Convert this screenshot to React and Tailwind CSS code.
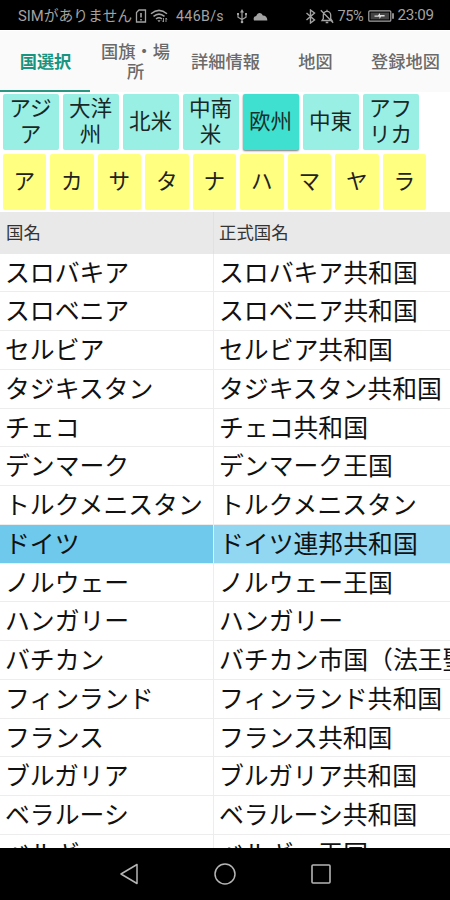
const tabs = ['国選択', '国旗・場所', '詳細情報', '地図', '登録地図'];
const regions = ['アジア', '大洋州', '北米', '中南米', '欧州', '中東', 'アフリカ'];
const kana = ['ア', 'カ', 'サ', 'タ', 'ナ', 'ハ', 'マ', 'ヤ', 'ラ'];
const countries = [
  ['スロバキア', 'スロバキア共和国'],
  ['スロベニア', 'スロベニア共和国'],
  ['セルビア', 'セルビア共和国'],
  ['タジキスタン', 'タジキスタン共和国'],
  ['チェコ', 'チェコ共和国'],
  ['デンマーク', 'デンマーク王国'],
  ['トルクメニスタン', 'トルクメニスタン'],
  ['ドイツ', 'ドイツ連邦共和国'],
  ['ノルウェー', 'ノルウェー王国'],
  ['ハンガリー', 'ハンガリー'],
  ['バチカン', 'バチカン市国（法王聖'],
  ['フィンランド', 'フィンランド共和国'],
  ['フランス', 'フランス共和国'],
  ['ブルガリア', 'ブルガリア共和国'],
  ['ベラルーシ', 'ベラルーシ共和国'],
  ['ベルギー', 'ベルギー王国'],
];

function StatusBar() {
  return (
    <header className="flex h-[30px] shrink-0 items-center bg-black pt-[2px] pl-[18px] text-[14px] leading-none text-[#a3a3a3]">
      <span className="w-[115px] shrink-0 whitespace-nowrap text-[14.8px]">SIMがありません</span>
      <svg className="ml-[2px] h-[14px] w-[12px] shrink-0" viewBox="0 0 12 14" fill="none" stroke="currentColor" strokeWidth="1.3">
        <path d="M4 1h6.5v12H1.5V3.5z" />
        <path d="M6 4v4.5M6 10v1.5" strokeWidth="1.6" />
      </svg>
      <svg className="ml-[3px] h-[14px] w-[18px] shrink-0" viewBox="0 0 18 14" fill="none" stroke="currentColor" strokeWidth="1.5">
        <path d="M1 4.7Q9-2 17 4.7M3.5 7.4Q9 2.8 14.5 7.4M6 10Q9 7.6 12 10" />
        <path d="M7.4 11.2h3.2L9 13.2z" fill="currentColor" stroke="none" />
        <path d="M13.5 9v4M12 11.5l1.5 1.5M16 13V9m1 1.5L16 9" strokeWidth="0.9" />
      </svg>
      <span className="ml-[8px] w-[49px] shrink-0 whitespace-nowrap text-[14.2px] tracking-[0.35px]">446B/s</span>
      <svg className="ml-[11px] h-[15px] w-[12px] shrink-0" viewBox="0 0 12 15" fill="none" stroke="currentColor" strokeWidth="1.2">
        <path d="M6 2v11M2 5.5v2.7l4 2.3 4-2.3V5.5" />
        <path d="M6 0 4 3.4h4zM1 4h2v2H1zM9 4h2v2H9z" fill="currentColor" stroke="none" />
        <circle cx="6" cy="13" r="1.3" fill="currentColor" stroke="none" />
      </svg>
      <svg className="ml-[5px] h-[10px] w-[15px] shrink-0" viewBox="0 0 15 10" fill="currentColor">
        <path d="M1 9.5C0 7 1.2 5.3 3.2 5 4.5 1.5 8 1 9.8 4.5 12.5 4.4 14.5 6.5 14.3 9.5z" />
      </svg>
      <svg className="ml-[37px] h-[15px] w-[11px] shrink-0" viewBox="0 0 11 15" fill="none" stroke="currentColor" strokeWidth="1.4">
        <path d="m1.5 4 8 7-4 3V1l4 3-8 7" />
      </svg>
      <svg className="ml-[4px] h-[15px] w-[14px] shrink-0" viewBox="0 0 14 15" fill="none" stroke="currentColor" strokeWidth="1.3">
        <path d="M2 11.5h10L10.7 9.5V6A3.7 3.7 0 0 0 7 2.3 3.7 3.7 0 0 0 3.3 6v3.5zM7 .8v1.5M5.7 13.5h2.6M.8 1.2l12.4 12.6" />
      </svg>
      <span className="ml-[3.5px] w-[28.5px] shrink-0 whitespace-nowrap text-[14.6px] tracking-[-0.4px]">75%</span>
      <svg className="ml-[1.5px] h-[12px] w-[26px] shrink-0" viewBox="0 0 26 12" fill="none" stroke="currentColor" strokeWidth="1.2">
        <rect x=".8" y=".8" width="22" height="10.4" rx="1" />
        <rect x="2.6" y="2.6" width="18.4" height="6.8" fill="#444" stroke="none" />
        <path d="M25 3.2v5.6" strokeWidth="1.7" />
        <path d="M6.5 5.6h3.4L12 3v2h4.6v1.4h-3.4L11.4 9V6.8H6.5z" fill="#ddd" stroke="none" />
      </svg>
      <span className="ml-[4px] whitespace-nowrap text-[15.2px] tracking-[-0.3px]">23:09</span>
    </header>
  );
}

function Tabs() {
  return (
    <nav className="grid h-[62px] shrink-0 grid-cols-5 border-t border-white bg-[#fafafa]">
      {tabs.map((tab, i) => (
        <div
          key={tab}
          className={
            i === 0
              ? 'flex items-center justify-center border-b-2 border-[#299782] pt-[2px] pl-[1px] text-[17.2px] leading-[20px] font-bold text-[#189581]'
              : 'flex items-center justify-center border-b-2 border-transparent pt-[2px] pl-[1px] text-center text-[17.2px] leading-[20px] font-medium text-[#6a6a6a]'
          }
        >
          <span className={i === 1 ? 'w-[72px]' : 'whitespace-nowrap'}>{tab}</span>
        </div>
      ))}
    </nav>
  );
}

function CountryTable() {
  return (
    <main className="flex min-h-0 flex-1 flex-col overflow-hidden">
      <div className="flex h-[41.5px] shrink-0 items-center bg-[#e9e9e9] text-[17.4px] text-[#333333]">
        <div className="flex h-full w-[214px] shrink-0 items-center border-r border-[#e1e1e1] pl-[6px]">国名</div>
        <div className="pl-[5px]">正式国名</div>
      </div>
      {countries.map(([name, official], i) => (
        <div key={name} className="flex h-[38.75px] shrink-0 text-[24.85px] leading-[39px] whitespace-nowrap text-[#111111]">
          <div
            className={
              i === 7
                ? 'w-[214px] shrink-0 border-r border-b border-[#ededed] bg-[#6ec9ec] pl-[5px]'
                : 'w-[214px] shrink-0 border-r border-b border-[#ededed] pl-[5px]'
            }
          >
            {name}
          </div>
          <div
            className={
              i === 7
                ? 'min-w-0 flex-1 overflow-hidden border-b border-[#ededed] bg-[#91d7f2] pl-[5px]'
                : 'min-w-0 flex-1 overflow-hidden border-b border-[#ededed] pl-[5px]'
            }
          >
            {official}
          </div>
        </div>
      ))}
    </main>
  );
}

export default function App() {
  return (
    <div className="flex h-[900px] w-[450px] flex-col overflow-hidden bg-white font-[Roboto,'Noto_Sans_CJK_JP',sans-serif]">
      <StatusBar />
      <Tabs />
      <div className="flex shrink-0 gap-[4px] pt-[2px] pl-[2.5px]">
        {regions.map((region, i) => (
          <button
            key={region}
            className={
              i === 4
                ? 'flex h-[56px] w-[56px] items-center justify-center rounded-[2px] bg-[#40e0d0] text-[21.6px] leading-[26px] text-[#17302e] shadow-[0_1px_2px_#777777]'
                : 'flex h-[56px] w-[56px] items-center justify-center rounded-[2px] bg-[#9aefe4] text-[21.6px] leading-[26px] text-[#182826]'
            }
          >
            <span className="w-[44px]">{region}</span>
          </button>
        ))}
      </div>
      <div className="flex shrink-0 gap-[4px] pt-[4px] pb-[2px] pl-[2.5px]">
        {kana.map((k) => (
          <button key={k} className="flex h-[56px] w-[43.5px] items-center justify-center rounded-[2px] bg-[#ffff80] text-[21.6px] text-[#222222]">
            {k}
          </button>
        ))}
      </div>
      <CountryTable />
      <footer className="flex h-[52px] shrink-0 items-center bg-black pl-[119px] text-[#b5b5b5]">
        <svg className="h-[22px] w-[20px]" viewBox="0 0 20 22" fill="none" stroke="currentColor" strokeWidth="1.5" strokeLinejoin="round">
          <path d="M18 1.5v19L2 11z" />
        </svg>
        <svg className="ml-[75px] h-[22px] w-[22px]" viewBox="0 0 22 22" fill="none" stroke="currentColor" strokeWidth="1.5">
          <circle cx="11" cy="11" r="10" />
        </svg>
        <svg className="ml-[75px] h-[20px] w-[20px]" viewBox="0 0 20 20" fill="none" stroke="currentColor" strokeWidth="1.6">
          <rect x="1" y="1" width="18" height="18" rx="1" />
        </svg>
      </footer>
    </div>
  );
}
